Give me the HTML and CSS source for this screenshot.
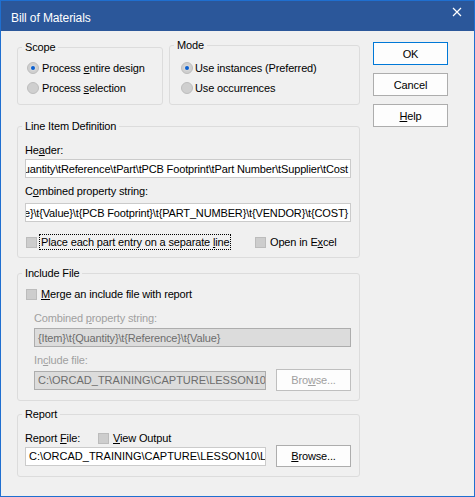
FILE: index.html
```html
<!DOCTYPE html>
<html lang="en">
<head>
  <meta charset="UTF-8" />
  <title>Bill of Materials</title>
  <link rel="stylesheet" href="styles.css">
</head>
<body>

<div class="window">
  <div class="titlebar">
    <span class="title">Bill of Materials</span>
    <svg class="close" width="10" height="10" viewBox="0 0 10 10">
      <path d="M1 1L9 9M9 1L1 9" stroke="#fff" stroke-width="1.2" fill="none" />
    </svg>
  </div>

  <div class="body">
    <div class="main">
      <div class="row">
        <fieldset class="group scope">
          <legend>Scope</legend>
          <div class="option"><span class="radio checked"></span><span>Process <u>e</u>ntire design</span></div>
          <div class="option"><span class="radio"></span><span>Process <u>s</u>election</span></div>
        </fieldset>
        <fieldset class="group mode">
          <legend>Mode</legend>
          <div class="option"><span class="radio checked"></span><span>Use instances (Preferred)</span></div>
          <div class="option"><span class="radio"></span><span>Use occurrences</span></div>
        </fieldset>
      </div>

      <fieldset class="group line-item">
        <legend>Line Item Definition</legend>
        <div class="label first">He<u>a</u>der:</div>
        <div class="field end"><span>Item\tQuantity\tReference\tPart\tPCB Footprint\tPart Number\tSupplier\tCost</span></div>
        <div class="label second">C<u>o</u>mbined property string:</div>
        <div class="field end"><span>{Item}\t{Quantity}\t{Reference}\t{Value}\t{PCB Footprint}\t{PART_NUMBER}\t{VENDOR}\t{COST}</span></div>
        <div class="checks">
          <div class="check wide"><span class="box"></span><span class="check-text focus">Place each part entry on a separate <u>l</u>ine</span></div>
          <div class="check"><span class="box"></span><span class="check-text">Open in E<u>x</u>cel</span></div>
        </div>
      </fieldset>

      <fieldset class="group include">
        <legend>Include File</legend>
        <div class="checks">
          <div class="check"><span class="box"></span><span class="check-text"><u>M</u>erge an include file with report</span></div>
        </div>
        <div class="indent">
          <div class="label disabled first">Combined <u>p</u>roperty string:</div>
          <div class="field disabled"><span>{Item}\t{Quantity}\t{Reference}\t{Value}</span></div>
          <div class="label disabled second">In<u>c</u>lude file:</div>
          <div class="field-row">
            <div class="field disabled path"><span>C:\ORCAD_TRAINING\CAPTURE\LESSON10</span></div>
            <button class="btn disabled">Bro<u>w</u>se...</button>
          </div>
        </div>
      </fieldset>

      <fieldset class="group report">
        <legend>Report</legend>
        <div class="report-head">
          <span class="report-label">Report <u>F</u>ile:</span>
          <div class="check"><span class="box"></span><span class="check-text"><u>V</u>iew Output</span></div>
        </div>
        <div class="field-row">
          <div class="field path"><span>C:\ORCAD_TRAINING\CAPTURE\LESSON10\LESSON10.BOM</span></div>
          <button class="btn"><u>B</u>rowse...</button>
        </div>
      </fieldset>
    </div>

    <div class="actions">
      <button class="btn default">OK</button>
      <button class="btn">Cancel</button>
      <button class="btn"><u>H</u>elp</button>
    </div>
  </div>
</div>

</body>
</html>
```

FILE: styles.css
```css
* {
  box-sizing: border-box;
}

html, body {
  margin: 0;
}

body {
  background: #fff;
  font: 11px/14px "Liberation Sans", Arial, sans-serif;
  color: #000;
  letter-spacing: -0.15px;
}

u {
  text-decoration-thickness: 1px;
  text-underline-offset: 1px;
}

.window {
  width: 475px;
  height: 497px;
  border: 1px solid #1f6fd0;
  background: #f0f0f0;
  display: flex;
  flex-direction: column;
}

.titlebar {
  flex: none;
  height: 30px;
  background: #2b579a;
  color: #fff;
  display: flex;
  align-items: flex-start;
  padding: 0 12px 0 10px;
}

.title {
  margin-top: 10px;
  font-size: 12px;
  line-height: 15px;
  letter-spacing: -0.1px;
}

.close {
  margin-left: auto;
  margin-top: 6px;
}

.body {
  display: flex;
  align-items: flex-start;
  padding: 7px 0 0 16px;
}

.main {
  width: 343px;
}

.actions {
  width: 75px;
  margin-left: 13px;
  margin-top: 4px;
  display: flex;
  flex-direction: column;
  gap: 8px;
}

.btn {
  height: 23px;
  padding: 0;
  border: 1px solid #adadad;
  background: #fdfdfd;
  font: inherit;
  color: #000;
  letter-spacing: -0.15px;
}

.btn.default {
  border-color: #0078d7;
}

.btn.disabled {
  border-color: #bfbfbf;
  color: #a0a0a0;
}

/* group boxes */
.row {
  display: flex;
  align-items: flex-start;
  gap: 6px;
}

.group {
  margin: 0;
  padding: 0 8px 7px 7px;
  border: 1px solid #dcdcdc;
  border-radius: 3px;
  min-width: 0;
}

.group legend {
  padding: 0 3px;
  margin-left: -3px;
  line-height: 14px;
}

.scope {
  width: 146px;
  margin-top: 2px;
  padding-top: 4px;
  padding-bottom: 6px;
}

.mode {
  width: 191px;
  padding-top: 6px;
  padding-bottom: 6px;
}

.line-item {
  margin-top: 14px;
  padding-top: 10px;
}

.include {
  margin-top: 8px;
  padding-top: 6px;
  padding-bottom: 9px;
}

.report {
  margin-top: 6px;
  padding-top: 10px;
  padding-bottom: 9px;
}

/* radios and checkboxes */
.option {
  display: flex;
  align-items: center;
  height: 20px;
}

.radio {
  position: relative;
  width: 12px;
  height: 12px;
  margin: 0 3px 0 2px;
  border-radius: 50%;
  border: 1px solid #bdbdbd;
  background: #cfcfcf;
}

.mode .radio {
  margin-left: 4px;
  margin-right: 2px;
}

.radio.checked::after {
  content: "";
  position: absolute;
  left: 3px;
  top: 3px;
  width: 4px;
  height: 4px;
  border-radius: 50%;
  background: #0a5fd0;
  box-shadow: 0 0 0 1px #d9d9d9;
}

.checks {
  display: flex;
  align-items: center;
  height: 16px;
}

.line-item .checks {
  margin-top: 12px;
}

.check {
  display: flex;
  align-items: center;
}

.check.wide {
  flex: 0 0 229px;
}

.box {
  width: 11px;
  height: 11px;
  margin: 0 2px 0 1px;
  border: 1px solid #bcbcbc;
  background: #cdcdcd;
}

.check-text {
  padding: 0 1px;
  border: 1px dotted transparent;
  line-height: 14px;
}

.check-text.focus {
  border-color: #000;
}

/* labels and edit fields */
.label {
  height: 14px;
}

.label.first {
  margin-bottom: 2px;
}

.line-item .label.second {
  margin-top: 6px;
  margin-bottom: 5px;
}

.label.disabled {
  color: #a0a0a0;
}

.indent {
  margin-left: 9px;
}

.include .label.first {
  margin-top: 9px;
  margin-bottom: 3px;
}

.include .label.second {
  margin-top: 6px;
  margin-bottom: 2px;
}

.field {
  height: 19px;
  display: flex;
  align-items: center;
  overflow: hidden;
  white-space: nowrap;
  padding: 0 2px 0 3px;
  border: 1px solid #cbcbcb;
  background: #fff;
}

.field.end {
  justify-content: flex-end;
}

.field.path {
  letter-spacing: 0;
}

.field.disabled {
  background: #dcdcdc;
  border-color: #adadad;
  color: #6d6d6d;
}

.field-row {
  display: flex;
  align-items: center;
  gap: 10px;
  height: 22px;
}

.field-row .field {
  flex: 1;
  min-width: 0;
}

.field-row .btn {
  flex: none;
  width: 75px;
  height: 22px;
}

.report-head {
  display: flex;
  align-items: center;
  height: 14px;
}

.report-label {
  flex: 0 0 72px;
}
```
